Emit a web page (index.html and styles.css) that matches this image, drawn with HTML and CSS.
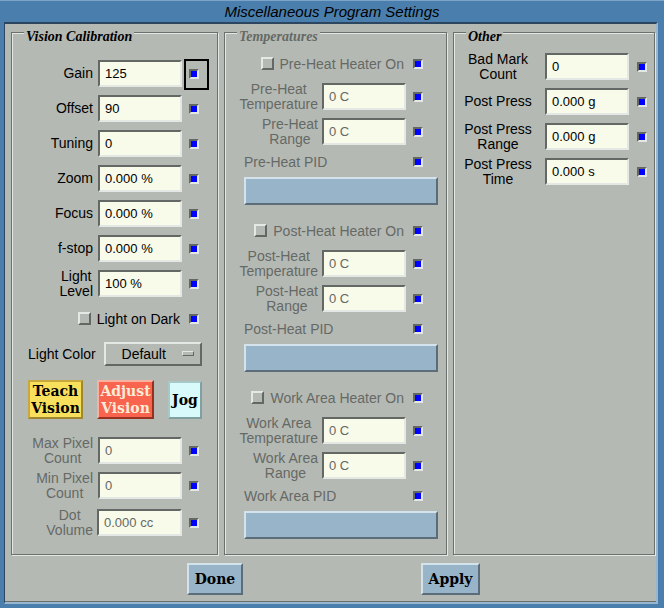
FILE: index.html
```html
<!DOCTYPE html>
<html lang="en">
<head>
    <meta charset="UTF-8">
    <title>Miscellaneous Program Settings</title>
    <link rel="stylesheet" href="styles.css">
</head>
<body>
    <div class="window">
        <div class="titlebar">Miscellaneous Program Settings</div>
        <div class="content">
            <div class="groups">
                <!-- Vision calibration -->
                <div class="group vision">
                    <div class="group-title">Vision Calibration</div>
                    <div class="row first"><span class="lbl">Gain</span><span class="field">125</span><span class="ind focus"></span></div>
                    <div class="row"><span class="lbl">Offset</span><span class="field">90</span><span class="ind"></span></div>
                    <div class="row"><span class="lbl">Tuning</span><span class="field">0</span><span class="ind"></span></div>
                    <div class="row"><span class="lbl">Zoom</span><span class="field">0.000 %</span><span class="ind"></span></div>
                    <div class="row"><span class="lbl">Focus</span><span class="field">0.000 %</span><span class="ind"></span></div>
                    <div class="row"><span class="lbl">f-stop</span><span class="field">0.000 %</span><span class="ind"></span></div>
                    <div class="row"><span class="lbl"><span>Light<br>Level</span></span><span class="field">100 %</span><span class="ind"></span></div>
                    <div class="row check-row"><span class="cbox"></span><span>Light on Dark</span><span class="ind"></span></div>
                    <div class="row opt-row">
                        <span class="opt-lbl">Light Color</span>
                        <span class="optmenu"><span class="opt-txt">Default</span><span class="optbar"></span></span>
                    </div>
                    <div class="btn-row">
                        <span class="tbtn teach">Teach<br>Vision</span>
                        <span class="tbtn adjust">Adjust<br>Vision</span>
                        <span class="tbtn jog">Jog</span>
                    </div>
                    <div class="row pixel-row"><span class="lbl"><span class="dim">Max Pixel<br>Count</span></span><span class="field"><span class="dim">0</span></span><span class="ind"></span></div>
                    <div class="row"><span class="lbl"><span class="dim">Min Pixel<br>Count</span></span><span class="field"><span class="dim">0</span></span><span class="ind"></span></div>
                    <div class="row dot-row"><span class="lbl"><span class="dim">Dot<br>Volume</span></span><span class="field"><span class="dim">0.000 cc</span></span><span class="ind"></span></div>
                </div>

                <!-- Temperatures (disabled) -->
                <div class="group temps">
                    <div class="group-title"><span class="dim">Temperatures</span></div>
                    <div class="heater">
                        <div class="row first check-row"><span class="cbox"></span><span class="dim">Pre-Heat Heater On</span><span class="ind"></span></div>
                        <div class="row m6"><span class="lbl"><span class="dim">Pre-Heat<br>Temperature</span></span><span class="field"><span class="dim">0 C</span></span><span class="ind"></span></div>
                        <div class="row"><span class="lbl"><span class="dim">Pre-Heat<br>Range</span></span><span class="field"><span class="dim">0 C</span></span><span class="ind"></span></div>
                        <div class="pid-row"><span class="dim">Pre-Heat PID</span><span class="ind"></span></div>
                        <div class="pid-bar"></div>
                    </div>
                    <div class="heater">
                        <div class="row first check-row"><span class="cbox"></span><span class="dim">Post-Heat Heater On</span><span class="ind"></span></div>
                        <div class="row m6"><span class="lbl"><span class="dim">Post-Heat<br>Temperature</span></span><span class="field"><span class="dim">0 C</span></span><span class="ind"></span></div>
                        <div class="row"><span class="lbl"><span class="dim">Post-Heat<br>Range</span></span><span class="field"><span class="dim">0 C</span></span><span class="ind"></span></div>
                        <div class="pid-row"><span class="dim">Post-Heat PID</span><span class="ind"></span></div>
                        <div class="pid-bar"></div>
                    </div>
                    <div class="heater">
                        <div class="row first check-row"><span class="cbox"></span><span class="dim">Work Area Heater On</span><span class="ind"></span></div>
                        <div class="row m6"><span class="lbl"><span class="dim">Work Area<br>Temperature</span></span><span class="field"><span class="dim">0 C</span></span><span class="ind"></span></div>
                        <div class="row"><span class="lbl"><span class="dim">Work Area<br>Range</span></span><span class="field"><span class="dim">0 C</span></span><span class="ind"></span></div>
                        <div class="pid-row"><span class="dim">Work Area PID</span><span class="ind"></span></div>
                        <div class="pid-bar"></div>
                    </div>
                </div>

                <!-- Other -->
                <div class="group other">
                    <div class="group-title">Other</div>
                    <div class="row first"><span class="lbl"><span>Bad Mark<br>Count</span></span><span class="field">0</span><span class="ind"></span></div>
                    <div class="row"><span class="lbl"><span>Post Press</span></span><span class="field">0.000 g</span><span class="ind"></span></div>
                    <div class="row"><span class="lbl"><span>Post Press<br>Range</span></span><span class="field">0.000 g</span><span class="ind"></span></div>
                    <div class="row"><span class="lbl"><span>Post Press<br>Time</span></span><span class="field">0.000 s</span><span class="ind"></span></div>
                </div>
            </div>

            <div class="actions">
                <span class="dlg-btn done">Done</span>
                <span class="dlg-btn apply">Apply</span>
            </div>
        </div>
    </div>
</body>
</html>
```

FILE: styles.css
```css
body {
    margin: 0;
    background-color: #b5b9b4;
    font-family: "Liberation Sans", Arial, sans-serif;
    font-size: 14px;
    color: #000;
}

.window {
    width: 664px;
    height: 608px;
    box-sizing: border-box;
    padding: 0 6px 4px 4px;
    background-color: #4a7eac;
    display: flex;
    flex-direction: column;
}

.titlebar {
    height: 22px;
    box-sizing: border-box;
    margin: 0 -6px 0 -4px;
    padding-top: 1px;
    border-top: 1px solid #7ca4c8;
    text-align: center;
    font-style: italic;
    font-size: 15px;
    line-height: 20px;
}

.content {
    flex: 1;
    background-color: #b5b9b4;
    border-top: 2px solid #2c4660;
    border-left: 1px solid #2c4660;
    border-right: 2px solid #98b6d0;
    border-bottom: 2px solid #98b6d0;
    box-shadow: inset 0 -1px 0 #6c706c;
    padding: 8px 0 0 6px;
}

.groups {
    display: flex;
    gap: 6px;
    height: 523px;
}

.group {
    position: relative;
    box-sizing: border-box;
    border: 1px solid #6c706c;
    box-shadow: inset 1px 1px 0 #e4e8e4, 1px 1px 0 #e4e8e4;
}

.vision {
    width: 207px;
    padding: 27px 0 0 1px;
}

.temps {
    width: 223px;
    padding: 17px 0 0 3px;
}

.other {
    width: 202px;
    padding: 20px 0 0 9px;
}

.group-title {
    position: absolute;
    top: -4px;
    left: 12px;
    padding: 0 2px;
    background-color: #b5b9b4;
    font: bold italic 14px/16px "Liberation Serif", serif;
}

/* disabled (insensitive) text */
.dim {
    color: #656965;
}

.row {
    display: flex;
    align-items: center;
    height: 27px;
    margin-top: 8px;
}

.row.first {
    margin-top: 0;
}

.lbl {
    display: flex;
    justify-content: flex-end;
    width: 80px;
    margin-right: 5px;
    text-align: center;
    line-height: 15px;
    white-space: nowrap;
}

.field {
    width: 84px;
    height: 27px;
    box-sizing: border-box;
    padding-left: 5px;
    background-color: #f8faea;
    border: 2px solid;
    border-color: #646864 #e4e8e4 #e4e8e4 #646864;
    font-size: 13px;
    line-height: 23px;
    white-space: pre;
}

.ind {
    position: relative;
    width: 10px;
    height: 10px;
    box-sizing: border-box;
    margin-left: 7px;
    background-color: #0000ff;
    border: 2px solid;
    border-color: #646864 #e4e8e4 #e4e8e4 #646864;
}

.focus::after {
    content: "";
    position: absolute;
    left: -7px;
    top: -12px;
    width: 25px;
    height: 31px;
    box-sizing: border-box;
    border: 2px solid #000;
}

.cbox {
    width: 13px;
    height: 13px;
    box-sizing: border-box;
    margin-right: 6px;
    border: 2px solid;
    border-color: #e4e8e4 #646864 #646864 #e4e8e4;
}

.check-row {
    justify-content: flex-end;
}

.check-row .ind {
    margin-left: 9px;
}

.vision .row {
    width: 186px;
}

.opt-row {
    padding-left: 15px;
}

.opt-lbl {
    margin-right: 8px;
}

.optmenu {
    display: flex;
    align-items: center;
    width: 98px;
    height: 24px;
    box-sizing: border-box;
    border: 2px solid;
    border-color: #e4e8e4 #646864 #646864 #e4e8e4;
}

.opt-txt {
    flex: 1;
    text-align: center;
}

.optbar {
    width: 12px;
    height: 5px;
    box-sizing: border-box;
    margin-right: 6px;
    border: 1px solid;
    border-color: #e4e8e4 #646864 #646864 #e4e8e4;
}

.btn-row {
    display: flex;
    gap: 14px;
    margin: 13px 0 0 15px;
}

.tbtn {
    display: flex;
    align-items: center;
    justify-content: center;
    height: 39px;
    box-sizing: border-box;
    border: 2px solid;
    text-align: center;
    font: bold 14px/17px "DejaVu Serif", serif;
}

.teach {
    width: 55px;
    background-color: #f8e05c;
    border-color: #c8a840 #a08830 #a08830 #c8a840;
}

.adjust {
    width: 57px;
    background-color: #f8644e;
    border-color: #f8b0a0 #983020 #983020 #f8b0a0;
    color: #fbead6;
}

.jog {
    width: 34px;
    height: 38px;
    margin-top: 1px;
    background-color: #d8fafa;
    border-color: #a8c8c8 #80a0a0 #80a0a0 #a8c8c8;
}

.pixel-row {
    margin-top: 18px;
}

.dot-row {
    margin-top: 10px;
}

.dot-row .lbl {
    margin-right: 4px;
}

.dot-row .field {
    width: 85px;
}

.temps .row {
    width: 195px;
}

.temps .lbl {
    width: 90px;
    margin-right: 4px;
}

.temps .row.m6 {
    margin-top: 6px;
}

.heater + .heater {
    margin-top: 12px;
}

.pid-row {
    display: flex;
    align-items: center;
    justify-content: space-between;
    width: 179px;
    height: 16px;
    margin: 9px 0 0 16px;
}

.pid-bar {
    width: 194px;
    height: 28px;
    box-sizing: border-box;
    margin: 7px 0 0 16px;
    background-color: #98b4c8;
    border: 2px solid;
    border-color: #d4e2ec #5c6c78 #5c6c78 #d4e2ec;
}

.other .lbl {
    width: 70px;
    margin-right: 12px;
    justify-content: center;
}

.other .ind {
    margin-left: 8px;
}

.actions {
    display: flex;
    margin-top: 8px;
    padding-left: 176px;
}

.dlg-btn {
    display: flex;
    align-items: center;
    justify-content: center;
    height: 32px;
    box-sizing: border-box;
    background-color: #98b4c8;
    border: 2px solid;
    border-color: #d4e2ec #5c6c78 #5c6c78 #d4e2ec;
    font: bold 14px "DejaVu Serif", serif;
}

.done {
    width: 56px;
}

.apply {
    width: 59px;
    margin-left: 178px;
}
```
